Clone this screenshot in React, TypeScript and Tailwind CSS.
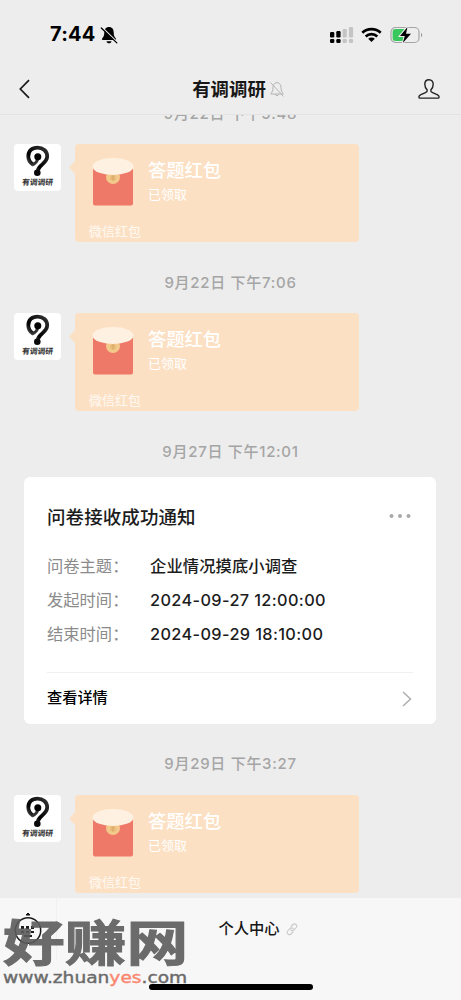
import { ReactNode } from "react";

function StatusBar() {
  return (
    <div className="flex h-[64px] items-start justify-between pl-[50px] pr-[38px] pt-[24px]">
      <div className="flex h-[21px] items-center">
        <span className="text-[20px] font-bold leading-[21px] tracking-[0.200px] text-black">7:44</span>
        <svg className="ml-[4px] h-[20px] w-[18px]" viewBox="0 0 18 20">
          <path d="M9 2C5.8 2 4.3 4.400 4.300 7.200c0 3.600-.8 4.700-2 6.100-.8.9-.4 1.700.6 1.700h12.200c1 0 1.400-.8.6-1.700-1.200-1.400-2-2.500-2-6.100C13.700 4.400 12.200 2 9 2ZM6.500 16.200c.3 1.300 1.200 2.100 2.500 2.100s2.200-.8 2.500-2.100Z" fill="#000" />
          <path d="M2.400 2.700 17.300 17.200" stroke="#ededed" strokeWidth="1.500" />
          <path d="M1.300 3 16.800 17.900" stroke="#000" strokeWidth="1.300" strokeLinecap="round" />
        </svg>
      </div>
      <div className="flex h-[21px] items-center">
        <svg className="h-[18px] w-[24px]" viewBox="0 0 24 18">
          <g fill="#000">
            <rect x="0" y="6" width="4.300" height="5.500" rx="1.200" />
            <rect x="6.300" y="5" width="4.300" height="6.500" rx="1.200" />
            <rect x="0" y="13" width="4.300" height="4" rx="1.200" />
            <rect x="6.300" y="13" width="4.300" height="4" rx="1.200" />
          </g>
          <g fill="#c4c4c4">
            <rect x="12.600" y="3" width="4.200" height="8.500" rx="1.200" />
            <rect x="18.900" y="1" width="4.200" height="10.500" rx="1.200" />
            <rect x="12.600" y="13" width="4.200" height="4" rx="1.200" />
            <rect x="18.900" y="13" width="4.200" height="4" rx="1.200" />
          </g>
        </svg>
        <svg className="ml-[7px] h-[16px] w-[21px]" viewBox="0 0 21 16">
          <g fill="none" stroke="#000" strokeWidth="2.700">
            <path d="M1.300 5.800C6.400.9 14.600.9 19.700 5.800" />
            <path d="M4.700 9.400C8 6.400 13 6.400 16.300 9.400" />
          </g>
          <path d="M7.200 11.800c1.900-1.700 4.700-1.700 6.600 0l-3.300 3.300Z" fill="#000" />
        </svg>
        <svg className="ml-[8px] h-[18px] w-[33px]" viewBox="0 0 33 18">
          <rect x="1" y="1.500" width="28" height="15" rx="4.500" fill="none" stroke="#a5a5a5" strokeWidth="1.200" />
          <path d="M5.500 3h8.500v12H5.500A3 3 0 0 1 2.600 12V6a3 3 0 0 1 2.900-3Z" fill="#37c75d" />
          <path d="M31 6.800c1.700.7 1.700 3.700 0 4.400Z" fill="#9c9c9c" />
          <path d="M17.500 1 10 10h4.800l-2 7 8.200-9.200h-5Z" fill="#000" stroke="#ededed" strokeWidth="2" paintOrder="stroke" />
        </svg>
      </div>
    </div>
  );
}

function NavBar() {
  return (
    <div className="flex h-[50px] items-center justify-between pl-[18px] pr-[20px]">
      <svg className="h-[20px] w-[24px]" viewBox="0 0 24 20">
        <path d="M11 1.200 2.300 10 11 18.800" fill="none" stroke="#1a1a1a" strokeWidth="1.700" />
      </svg>
      <div className="flex items-center pl-[18px]">
        <h1 className="text-[18.400px] font-bold leading-[24px] text-[#171717]">有调调研</h1>
        <svg className="ml-[3px] h-[17px] w-[16px]" viewBox="0 0 16 17">
          <g fill="none" stroke="#b4b4b4" strokeWidth="1">
            <path d="M8 1.500c-3 .5-4 2.600-4 5 0 3-.8 4.400-2.300 6.500h12.600C12.800 10.900 12 9.500 12 6.500c0-2.400-1-4.500-4-5ZM6.300 13.200c.2 1.800 3.200 1.800 3.400 0M1.500 1.500l13 14" />
          </g>
        </svg>
      </div>
      <svg className="h-[22px] w-[24px]" viewBox="0 0 24 22">
        <path d="M12 1.700c-2.700 0-4.200 1.900-4.200 4.500 0 2.200 1 4.300 2.400 5.700.3 1.600-.2 2.100-1.800 2.800l-5 2.100c-1.200.6-1.500 1.100-1.500 2.100 0 .9.300 1.200 1.100 1.200h18c.8 0 1.100-.3 1.100-1.200 0-1-.3-1.500-1.500-2.100l-5-2.100c-1.600-.7-2.100-1.200-1.800-2.800 1.400-1.400 2.400-3.500 2.400-5.700 0-2.600-1.500-4.500-4.200-4.500Z" fill="none" stroke="#222" strokeWidth="1.400" />
      </svg>
    </div>
  );
}

function Time({ children }: { children: ReactNode }) {
  return (
    <div className="text-center text-[15px] leading-[20px] font-medium tracking-[0.700px] text-[#a5a5a5]">
      {children}
    </div>
  );
}

function Avatar() {
  return (
    <div className="flex h-[47px] w-[47px] shrink-0 flex-col items-center rounded-[4px] bg-white">
      <svg className="mt-[1px] h-[32px] w-[26px]" viewBox="0 0 26 32">
        <defs>
          <linearGradient id="mark" x1="0" x2="1" y1="1" y2="0">
            <stop offset="0" stopColor="#777" />
            <stop offset=".35" stopColor="#000" />
            <stop offset="1" stopColor="#333" />
          </linearGradient>
        </defs>
        <path d="M8 19.500C4.500 17.500 3.300 14.800 3.300 11.300 3.300 6 7 2.600 12.500 2.600s9.700 3.600 9.700 8.700c0 7-8 8.200-9.400 14" fill="none" stroke="url(#mark)" strokeWidth="3.800" />
        <path d="M7 20c4-1.500 5.300-3.500 6-7" fill="none" stroke="#333" strokeWidth="3" />
        <circle cx="12.800" cy="11.700" r="3.500" fill="#050505" />
        <circle cx="12.300" cy="27.700" r="3.300" fill="#090909" />
      </svg>
      <span className="-skew-x-6 whitespace-nowrap text-[7.800px] font-bold leading-[10px] text-[#303030]">有调调研</span>
    </div>
  );
}

function RedPacket() {
  return (
    <div className="flex h-[98px] items-start pl-[14px]">
      <Avatar />
      <svg className="mt-[17px] ml-[8px] h-[13px] w-[6px]" viewBox="0 0 6 13">
        <path d="M6 0v13L1 7.500Q0 6.500 1 5.500Z" fill="#fce0c3" />
      </svg>
      <div className="flex h-[98px] w-[284px] flex-col rounded-[4px] bg-[#fce0c3] pl-[14px] text-white">
        <div className="flex h-[77px] pt-[13px]">
          <svg className="ml-[3px] h-[49px] w-[42px]" viewBox="0 0 42 49">
            <path d="M1 10h40v36.500a2 2 0 0 1-2 2H3a2 2 0 0 1-2-2Z" fill="#ee7968" />
            <circle cx="21" cy="20" r="7" fill="#f3c98b" />
            <path d="m18.500 16.500 2.500 3 2.500-3M21 19.500v4.500M18.300 20h5.400M18.300 22h5.400" fill="none" stroke="#d6a861" strokeWidth=".9" />
            <ellipse cx="21" cy="9.500" rx="20.500" ry="8.500" fill="#fff1e1" />
          </svg>
          <div className="ml-[14px]">
            <div className="text-[18.300px] font-medium leading-[26px]">答题红包</div>
            <div className="text-[13px] leading-[22px]">已领取</div>
          </div>
        </div>
        <div className="text-[13px] leading-[20px] text-white/80">微信红包</div>
      </div>
    </div>
  );
}

const details = [
  { label: "问卷主题", value: "企业情况摸底小调查" },
  { label: "发起时间", value: "2024-09-27 12:00:00" },
  { label: "结束时间", value: "2024-09-29 18:10:00" },
];

function NoticeCard() {
  return (
    <div className="ml-[24px] mr-[25px] h-[247px] rounded-[6px] bg-white px-[23px] pt-[25px]">
      <div className="flex h-[30px] items-center justify-between">
        <h2 className="text-[18.500px] font-medium leading-[30px] tracking-[0.080px] text-[#1c1c1c]">问卷接收成功通知</h2>
        <svg className="mr-[2px] mb-[3px] h-[6px] w-[22px]" viewBox="0 0 22 6" fill="#a9a9a9">
          <circle cx="2.500" cy="3" r="2" />
          <circle cx="11" cy="3" r="2" />
          <circle cx="19.500" cy="3" r="2" />
        </svg>
      </div>
      <div className="mt-[17px] h-[123px]">
        {details.map(({ label, value }) => (
          <div key={label} className="flex h-[34px] items-center text-[16.300px]">
            <span className="w-[103px] whitespace-nowrap text-[#8b8b8b]">{label}：</span>
            {/^\d/.test(value) ? (
              <span className="font-medium tracking-[0.380px] text-[#1c1c1c]">{value}</span>
            ) : (
              <span className="font-medium tracking-[0.100px] text-[#1c1c1c]">{value}</span>
            )}
          </div>
        ))}
      </div>
      <div className="flex h-[52px] items-center justify-between border-t border-[#f0f0f0]">
        <span className="text-[15.200px] font-medium text-black">查看详情</span>
        <svg className="mr-[1px] h-[16px] w-[10px]" viewBox="0 0 10 16">
          <path d="m1 1 7.500 7L1 15" fill="none" stroke="#adadad" strokeWidth="1.500" />
        </svg>
      </div>
    </div>
  );
}

function Watermark() {
  return (
    <div className="absolute left-[3px] top-[21px] w-[190px] text-[#5c5c5c] opacity-90">
      <div className="h-[51px] origin-left scale-x-[1.260] whitespace-nowrap text-[49px] font-bold leading-[50px] [-webkit-text-stroke:1px_#5c5c5c]">好赚网</div>
      <div className="flex h-[16px] origin-left scale-x-[1.240] items-center whitespace-nowrap font-['DejaVu_Sans',sans-serif] text-[15px] leading-[16px] [-webkit-text-stroke:0.400px]">
        <span>www.zhuan</span>
        <span className="text-[#fb7b61]">yes</span>
        <span>.com</span>
      </div>
    </div>
  );
}

function BottomBar() {
  return (
    <div className="relative flex h-[102px] bg-[#f7f7f7]">
      <div className="flex h-[62px] w-[57px] items-center justify-center border-r border-[#f0f0f0]">
        <svg className="h-[34px] w-[30px]" viewBox="0 0 30 34">
          <circle cx="15" cy="18.500" r="12.700" fill="none" stroke="#1c1c1c" strokeWidth="1.500" />
          <path d="m13 3 2-2 2 2Z" fill="#111" stroke="#111" />
          <path d="M8 14h3v3H8Zm5 0h3v3h-3Zm5 0h3v3h-3ZM8 19h3v2H8Zm5 0h3v2h-3Zm5 0h3v2h-3Zm-7 4h8v2h-8Z" fill="#1c1c1c" />
        </svg>
      </div>
      <div className="flex h-[62px] flex-1 items-center justify-center pr-[2px]">
        <span className="text-[15.300px] font-medium text-[#171717]">个人中心</span>
        <svg className="ml-[6px] h-[13px] w-[12px]" viewBox="0 0 12 13">
          <g fill="none" stroke="#cacaca" strokeWidth="1.100" strokeLinecap="round">
            <path d="M5 3.500 7 1.500c1.800-1.700 5 .8 3.300 3L8 7C7 8 5.500 7.700 4.700 6.800" />
            <path d="m7 9-2 2c-1.900 1.800-5-.8-3.300-3L4 5.500c1-1 2.500-.7 3.300.2" />
          </g>
        </svg>
      </div>
      <Watermark />
      <div className="absolute bottom-[10px] left-[149px] h-[6px] w-[164px] rounded-full bg-black" />
    </div>
  );
}

export default function App() {
  return (
    <div className="flex h-[1000px] w-[461px] flex-col overflow-hidden bg-[#ededed] font-['Inter','Noto_Sans_CJK_SC',sans-serif]">
      <header className="h-[115px] shrink-0 border-b border-[#e3e3e3]">
        <StatusBar />
        <NavBar />
      </header>
      <main className="h-[783px] shrink-0 overflow-hidden">
        <div className="-mt-[11px]">
          <Time>9月22日 下午5:48</Time>
        </div>
        <div className="mt-[20px]">
          <RedPacket />
        </div>
        <div className="py-[31px]">
          <Time>9月22日 下午7:06</Time>
        </div>
        <div className="-mt-[11px]">
          <RedPacket />
        </div>
        <div className="pb-[15px] pt-[31px]">
          <Time>9月27日 下午12:01</Time>
        </div>
        <NoticeCard />
        <div className="pb-[21px] pt-[30px]">
          <Time>9月29日 下午3:27</Time>
        </div>
        <RedPacket />
      </main>
      <BottomBar />
    </div>
  );
}
